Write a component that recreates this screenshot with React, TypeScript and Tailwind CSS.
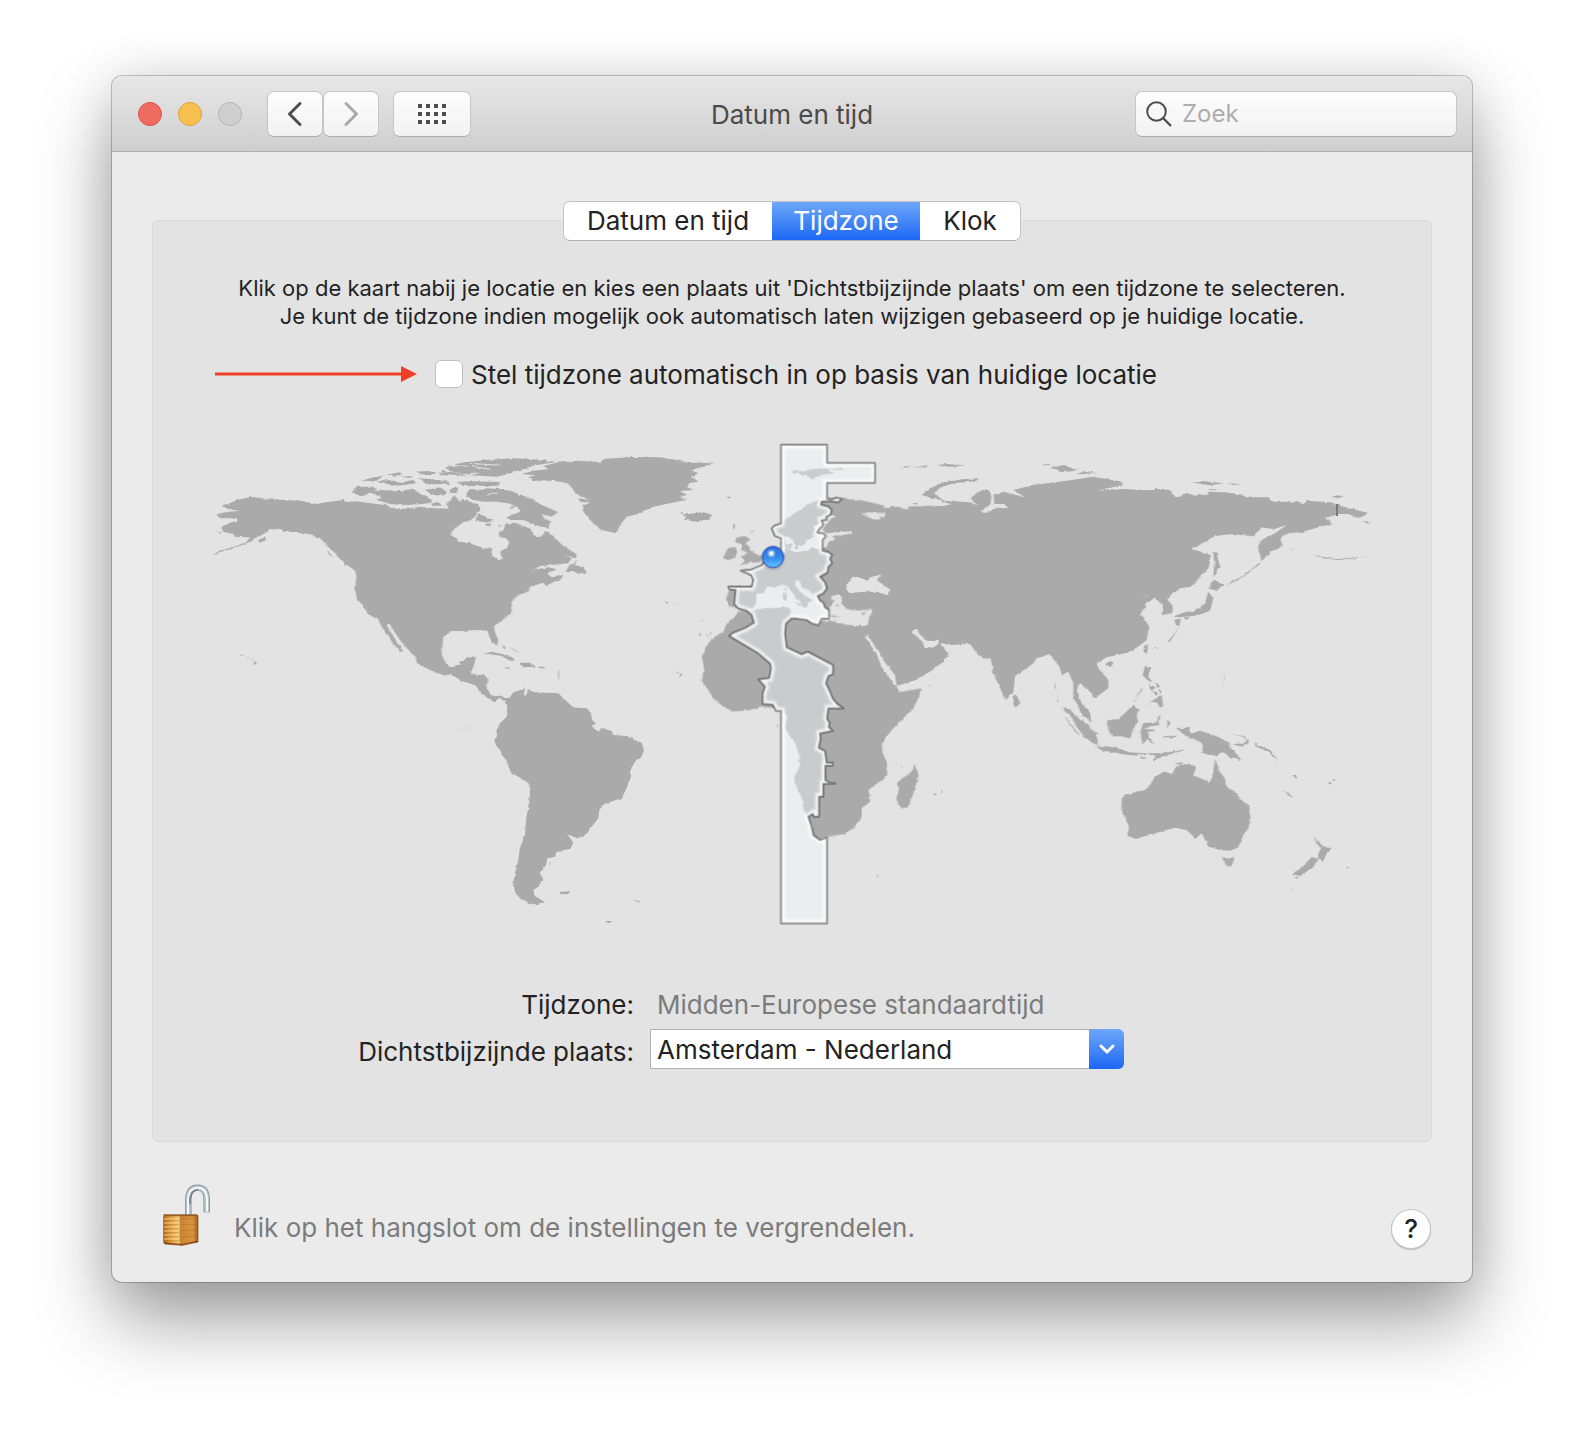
import React from "react";

const tabs = [
    { label: "Datum en tijd", width: "w-[208px]" },
    { label: "Tijdzone", width: "w-[148px]" },
    { label: "Klok", width: "w-[100px]" },
];

const tabStyle = (i: number, active: number) =>
    i === active
        ? "bg-linear-to-b from-[#6ea6f8] to-[#1a66f5] text-white"
        : "bg-white text-[#232323]";

const Padlock = () => (
    <svg viewBox="0 0 144 192" className="h-16 w-12 shrink-0" aria-hidden="true">
        <defs>
            <linearGradient id="brass" x1="0" x2="1" y1="0" y2="0">
                <stop offset="0" stopColor="#b56c1f" />
                <stop offset=".2" stopColor="#e39b41" />
                <stop offset=".45" stopColor="#f6c87c" />
                <stop offset=".48" stopColor="#c98432" />
                <stop offset=".85" stopColor="#d9953e" />
                <stop offset="1" stopColor="#a35c18" />
            </linearGradient>
        </defs>
        <path d="M79 94V44Q81 11 107 11Q133 11 134 44V85" fill="none" stroke="#7b888f" strokeWidth="19" />
        <path d="M79 94V44Q81 11 107 11Q133 11 134 44V83" fill="none" stroke="#b4c2c9" strokeWidth="15" />
        <path d="M78 94V46Q80 12 107 11Q133 11 135 44V83" fill="none" stroke="#f3f8fa" strokeWidth="6" />
        <path d="M84 60V44Q87 19 108 17" fill="none" stroke="#76838a" strokeWidth="5" />
        <path d="M6 92H104Q108 92 108 97V174L60 184L9 180Q5 179 5 174V97Q5 92 9 91Z" fill="url(#brass)" stroke="#7c4514" strokeWidth="2" />
        <path d="M8 95H106" stroke="#8a5420" strokeWidth="3" />
        {[105, 117, 129, 141, 153, 165].map((y) => (
            <g key={y}>
                <path d={`M6 ${y}H51`} stroke="#ffd894" strokeWidth="4" opacity=".6" />
                <path d={`M6 ${y + 5}H51`} stroke="#94540f" strokeWidth="2" opacity=".45" />
            </g>
        ))}
        <path d="M56 104H104M56 122H104M56 139H104M56 158H104" stroke="#a7651f" strokeWidth="3" opacity=".35" />
        <path d="M8 177L60 182L106 172" fill="none" stroke="#6f3208" strokeWidth="4" opacity=".7" />
    </svg>
);

const zonePath =
    "M303 44H441V99H585V159H441V205L455 208L470 203L485 206L475 217L450 213L425 215L423 224L445 230L455 240L452 253L438 262L441 269L425 271L430 285L415 300L412 308L430 310L438 318L428 330V362L445 366L456 375L450 386L456 400L445 410L442 428L420 440L435 457L441 475L430 490L413 498L420 512L430 518L435 532L447 540V566H425L415 586L395 580L380 570L345 565H335L318 580L315 610L320 652L365 673L383 665L459 705V732L445 738L438 760L450 785L458 805L470 820L490 835H445L441 865L449 880L446 890L458 903L420 910L422 925L416 953L435 963L440 998H458V1007H436V1050L448 1058L465 1060L430 1062V1100H417V1160H402L398 1152L385 1160L395 1190L400 1215L420 1230L441 1222V1480H303V843H288L278 824L248 822V790L255 770L235 748L268 744L273 715L270 700L235 670L148 618L160 608L195 594L222 578L215 555L200 542L175 535L163 522L167 480L148 478L145 470L215 470L220 450L213 435L182 422L215 418L245 405L255 392L303 360V325L285 318L275 295L283 287L303 280Z";

// map units are a third of a pixel, every group keeps its own local origin
const WorldMap = () => (
    <svg viewBox="0 0 3552 1470" className="block h-auto w-full" role="img" aria-label="Wereldkaart">
        <defs>
            <filter id="coast" x="-5%" y="-5%" width="110%" height="110%">
                <feTurbulence type="fractalNoise" baseFrequency=".07" numOctaves="2" seed="4" />
                <feDisplacementMap in="SourceGraphic" scale="9" xChannelSelector="R" yChannelSelector="G" />
            </filter>
            <filter id="glow">
                <feGaussianBlur stdDeviation="3" />
            </filter>
            <clipPath id="zone">
                <path d={zonePath} />
            </clipPath>
            <linearGradient id="pin" x1="0" x2="0" y1="0" y2="1">
                <stop offset="0" stopColor="#2f6fd6" />
                <stop offset=".5" stopColor="#3488ea" />
                <stop offset="1" stopColor="#5ec9ff" />
            </linearGradient>
        </defs>
        <g fill="#aaaaaa" filter="url(#coast)">
            {/* North America, west */}
            <g>
                <path d="M60 196L90 190L110 180L155 171L185 175L240 179L300 182L350 192L385 186L430 180L440 186L470 184L500 188L560 196L570 203L620 206L660 200L690 204L745 206L742 188L752 176L764 165L775 182L800 189L812 200L840 210L830 224L815 240L790 246L760 270L753 288L770 295L775 306L810 312L850 325L875 327L875 345L895 360L902 362V542L885 550L880 565L890 590L893 612L880 610L868 590L862 570L850 572L835 565L800 570L805 577L780 572L755 573L730 590L728 610L724 640L735 668L755 682L785 675L795 655L828 650L820 680L812 703L850 705L863 715L860 745L872 765L895 775L870 775L845 765L840 750L820 732L785 722L750 702L735 707L690 690L650 668L648 655L625 630L600 600L580 570L570 553L560 556L580 590L608 632L600 633L575 605L565 585L550 570L535 540L505 523L490 500L470 475L465 445L470 405L462 390L435 370L405 340L385 320L360 295L330 283L290 276L250 275L245 268L210 268L195 280L175 290L150 305L110 322L60 337L37 346L60 332L110 318L140 305L150 292L105 290L100 282L70 275L62 262L85 248L113 243L110 235L60 235L47 223L85 215L118 213L85 207Z" />
                <path d="M505 155L540 150L600 153L640 146L665 165L700 180L690 190L630 195L570 193L530 180L545 172Z" />
                <path d="M455 160L465 140L510 140L532 148L515 155L490 168Z" />
                <path d="M480 124L520 112L550 108L530 122ZM530 126L560 118L600 128L640 120L650 130L590 137ZM560 104L600 97L605 104L580 108ZM645 95L690 93L710 100L680 106ZM650 115L700 118L745 125L750 133L700 133ZM680 150L720 142L740 155L730 167L700 165ZM735 82L780 75L820 85L845 95L790 103L750 92ZM715 97L750 102L752 107L725 105ZM750 145L775 142L770 160L752 158ZM600 110L640 108L630 114ZM690 192L712 186L728 196L700 199Z" />
                <path d="M173 300L195 292L198 300L180 308ZM50 276L66 277L60 281ZM360 292L380 304L372 306ZM380 330L402 354L388 345ZM430 368L460 376L485 394L470 390Z" />
                <path d="M159 662L171 670L163 675ZM122 644H129V647H122ZM140 651L148 654L144 656ZM150 657H158V659Z" />
            </g>
            {/* North America, east and Greenland */}
            <g transform="translate(660 0)">
                <path d="M257 250L290 252L330 264L340 285L360 292L378 275L385 275L430 318L470 343L468 355L430 348L455 355L445 370L400 374L360 378L325 403L350 388L385 382L410 388L382 402L395 412L430 405L425 414L378 437L370 428L330 440L325 455L295 465L275 485L277 515L240 545L222 558L225 580L235 600L230 617L215 600L205 575L195 570L100 572V304L115 305L150 310L190 325L215 327L218 350L235 362L247 355L240 335L262 322L268 308L258 295L240 292L236 280L252 266Z" />
                <path d="M435 396L450 375L472 360L463 376L490 380L498 402L480 400L460 396Z" />
                <path d="M305 102L340 92L385 88L370 78L410 68L470 62L540 66L555 56L640 51L720 52L800 65L760 66L885 70L850 80L810 90L835 100L815 110L835 125L805 130L800 140L820 150L780 153L800 165L780 170L800 180L760 187L690 203L655 222L620 230L600 255L590 280L545 270L510 240L490 215L487 195L515 188L480 185L475 175L510 180L470 165L445 130L400 122L340 122L325 112L345 106Z" />
                <path d="M75 85L120 68L200 60L280 55L370 60L410 66L330 78L340 82L290 92L265 102L230 110L150 106L180 98L110 92Z" />
                <path d="M60 92L100 96L150 110L80 102ZM110 126L150 124L240 126L235 137L130 138ZM5 122L60 120L65 130L20 132ZM15 150L60 145L75 155L60 165L30 160Z" />
                <path d="M140 160L150 147L185 150L200 145L260 148L290 160L340 178L355 190L412 215L395 230L362 222L390 245L385 265L355 258L310 240L265 240L260 232L300 215L300 205L265 190L230 185L190 185L160 180L138 172Z" />
                <path d="M165 243L178 222L200 232L222 243L200 247ZM95 190L130 180L175 192L180 212L165 222L140 212ZM196 252L212 250L214 256L200 259ZM234 254L242 255L240 262ZM265 202L285 198L280 206Z" />
                <path d="M775 218L800 223L850 216L877 225L865 238L825 245L790 238L800 230Z" />
                <path d="M190 642L215 635L250 643L290 662L270 662L245 648L215 643ZM300 668L330 668L348 680L310 682ZM252 681L272 683L262 687ZM358 681H374V685H358ZM248 615L258 625L252 628ZM265 618L300 640L285 634Z" />
                <path d="M415 690L419 715L416 718L413 695ZM730 484L748 487L738 488ZM760 492H765V495ZM835 582L850 586L840 587ZM858 582L868 588L860 588ZM870 578L878 576L873 586ZM765 693H772L780 712L788 700L776 703ZM842 540H850V543ZM922 171H932V174H922ZM938 258L946 256L942 266Z" />
                <path d="M90 76L160 80L210 88M150 70L240 76M10 138L110 142M200 166Q215 156 232 160" fill="none" stroke="#e3e3e3" strokeWidth="3" />
            </g>
            {/* South America */}
            <g transform="translate(780 660)">
                <path d="M0 5L15 0H45L30 43L75 48L82 60L78 90L95 112L120 105L140 118L150 112L160 97L190 88L195 82L193 100L200 110L203 90L225 97L260 98L295 100L310 115L340 142L375 145L393 158L395 175L405 190L395 198L415 215L425 205L455 213L460 225L500 228L525 240L545 248L552 270L545 290L525 305L512 328L510 350L500 385L485 415L460 422L430 435L418 450L415 475L395 500L370 530L350 535L322 523L340 548L330 567L290 575L285 590L262 595L258 615L238 640L250 657L240 668L235 680L220 690L225 708L255 727L235 735L205 728L180 715L165 695L160 670L165 640L175 600L180 560L195 525L198 480L205 440L210 400L208 372L190 358L155 340L140 305L120 270L107 255L103 238L115 228L108 215L120 190L140 170L142 140L138 125L118 113L105 127L65 100L60 85L30 70L0 62Z" />
                <path d="M298 696L330 694L325 702L302 703ZM265 606L273 606L270 612ZM520 720L535 722L543 728L530 725ZM2 200L10 208L5 208ZM18 202L24 206H18ZM440 783H455V786H440Z" />
            </g>
            {/* Europe, Near East */}
            <g transform="translate(1440 -30)">
                <path d="M145 528L138 505L148 480L145 470L185 466L215 468L220 450L210 432L182 420L215 418L245 405L260 385L300 372L314 366L312 350L310 322L290 322L275 300L280 290L305 278L340 252L380 225L415 210L455 203L485 205L550 212L600 224L628 240L612 249L565 247L545 249L575 266L602 268L598 260L622 262L618 250L650 250L655 232L688 240L684 229L760 228V560L640 560L577 537L560 540L520 542L485 532L460 520L450 530L445 545L430 532L420 515L408 502L390 486L365 470L358 452L345 452L346 470L375 500L400 510L385 518L380 532L368 535L366 518L345 502L330 478L315 462L290 470L262 470L250 490L230 490L228 520L215 535L180 542L165 532Z" />
                <path d="M130 387L135 372L145 353L165 352L172 365L165 383L145 390Z" />
                <path d="M165 335L170 322L195 318L212 328L196 340L208 350L215 365L235 375L248 382L240 398L215 398L178 405L195 392L185 382L202 368L180 358L185 345Z" />
                <path d="M308 490L320 488L320 510L310 512ZM313 475L319 472L318 485ZM345 518L370 518L362 528ZM452 555L480 560L455 561ZM540 550L560 545L548 554Z" />
                <path d="M330 120L370 125L400 117L440 115L462 130L420 135L398 148L375 134L345 130ZM440 118L490 115L485 120ZM158 286H166L162 293ZM212 304L222 302L214 312ZM140 201H152V204H140ZM662 110L700 112L745 106L740 113Z" />
            </g>
            {/* Africa */}
            <g transform="translate(1440 480)">
                <path d="M175 33L215 30L260 25L325 22L335 38L330 50L345 55L380 60L415 75L430 62L450 62L475 68L505 75L545 78L560 78L545 92L565 125L590 160L605 200L630 235L650 262L655 277L722 265L718 290L700 325L670 355L635 390L605 430L608 460L620 485L622 525L605 540L565 570L572 600L545 625L545 650L520 685L490 703L445 708L420 718L400 710L395 680L380 650L370 620L367 595L345 555L342 530L360 500L357 460L345 430L325 400L315 385L322 345L305 330L285 325L245 320L210 330L155 335L125 315L100 295L85 270L65 240L72 205L65 170L85 130L105 110L130 95L140 70L165 50Z" />
                <path d="M652 545L690 520L705 493L716 525L700 580L685 620L665 625L647 600L657 570Z" />
                <path d="M762 580H768V585H762ZM782 573H787V578H782ZM745 256L755 257L748 260ZM645 490L652 494H647ZM663 498L668 502H664ZM291 375H295V379H291ZM590 830H596V833H590Z" />
            </g>
            {/* Asia */}
            <g transform="translate(2100 0)">
                <path d="M-40 200L-5 200L5 210L30 208L80 197L130 198L152 192L120 183L155 183L210 187L232 200L212 175L235 155L265 150L275 165L270 195L240 213L262 218L290 203L325 205L315 192L283 192L281 165L310 155L375 172L340 150L400 135L500 122L580 110L668 125L665 135L595 152L680 147L760 152L790 146V470L745 465L710 485L740 498L722 520L748 560L740 600L695 635L620 652L592 668L595 685L625 720L625 745L585 775L575 760L540 730L530 750L545 790L570 820L575 848L545 825L530 790L520 775L520 730L505 695L485 705L478 680L450 642L410 655L400 670L345 710L340 755L318 780L305 755L280 700L270 648L268 657L252 655L230 640L210 612L150 615L118 608L145 642L130 665L75 705L40 722L-10 738L-25 705L-50 675L-65 640L-90 605L-95 580L-100 595L-118 575L-112 558L-95 555L-83 508L-100 460L-60 300Z" />
                <path d="M65 165L90 145L130 127L190 118L235 115L230 123L160 130L120 143L103 160L125 178L155 190L110 178ZM450 85L490 75L535 92L490 96L470 88ZM530 103L555 92L590 100ZM430 73H450V76H430ZM35 190L55 188L45 194ZM110 75L140 72L195 76L150 80ZM0 80L30 79L20 83Z" />
                <path d="M618 673L628 664L642 665L632 682ZM338 766L348 764L361 788L350 802L341 798ZM465 725L467 750L463 742ZM470 765L476 790L472 785Z" />
            </g>
            {/* Siberia, Japan, Philippines */}
            <g transform="translate(2790 0)">
                <path d="M-30 148L60 152L80 147L120 150L135 170L150 172L160 162L230 165L235 155L280 157L330 163L350 172L415 172L430 185L500 185L525 190L530 182L600 187L640 200L690 213L718 220L685 235L655 222L628 222L585 235L612 252L570 260L520 275L475 280L450 295L458 318L420 340L395 363L383 320L395 300L435 280L470 255L430 268L395 262L370 288L300 283L255 288L187 328L240 345L238 380L185 440L150 445L110 475L130 500L125 520L98 525L98 490L70 475L35 500L18 485L58 465L-30 470Z" />
                <path d="M130 530L160 517L195 512L225 490L235 455L250 472L240 512L215 522L190 528L150 532ZM133 540L152 535L148 558L138 556ZM165 532H180L168 541ZM236 446L250 420L282 435L258 452ZM250 335L262 340L265 365L272 382L260 388V405L250 410L253 370Z" />
                <path d="M285 437L310 427L345 407L390 372L388 368L340 407L300 428Z" />
                <path d="M40 635L42 622L55 612L50 642ZM38 705L45 678L62 682L55 710L68 728L45 715ZM62 785L95 765L100 798L90 803L82 788ZM56 728L72 742L66 758ZM75 725L92 740L82 745ZM72 752L86 760L76 768ZM85 743L95 756L90 762ZM40 740L12 775L35 752Z" />
                <path d="M190 128L215 123L280 130L240 136ZM290 130L335 132L315 136ZM235 147L265 148L245 151ZM605 170L625 166L642 170L620 174ZM695 243L725 246L710 249ZM545 345L580 355L625 360L660 357L720 347L660 354L620 357L585 352ZM480 323L495 330L488 329ZM150 558L120 605L112 605L130 585ZM70 622L90 620L80 625ZM285 700L278 732L284 715Z" />
            </g>
            {/* Indonesia and Oceania */}
            <g transform="translate(2490 660)">
                <path d="M275 415L290 403L345 390L358 378L375 350L405 333L425 343L440 318L465 312L500 318L490 345L540 368L548 345L555 298L570 335L582 352L590 380L612 393L630 415L658 440L662 475L655 505L640 525L625 562L600 572L570 570L535 560L515 520L495 537L470 510L435 503L380 518L350 527L318 537L292 527L297 500L275 450Z" />
                <g stroke="#aaaaaa" strokeWidth="2">
                    <path d="M577 592L594 597L612 592L605 615L592 619ZM850 532L866 544L880 562L903 565L892 578L880 600L866 596L864 586L874 568ZM862 597L850 620L830 632L815 648L788 642L820 620L845 592ZM796 652L804 651L799 656ZM438 310L458 308L450 314Z" />
                    <path d="M98 145L120 150L150 180L168 188L192 215L202 230L202 255L185 246L160 225L140 200L128 175ZM198 260L230 260L265 266L300 278L350 281L300 285L255 277L215 270ZM232 182L265 178L285 160L310 135L328 150L318 162L324 185L310 205L300 235L275 228L245 228L236 208ZM332 215L340 190L380 188L390 165L385 195L345 200L348 208L372 210L352 218L368 250L350 236L338 252Z" />
                    <path d="M440 205L475 205L482 222L510 213L560 230L590 245L600 262L635 300L600 290L580 275L555 287L515 278L520 255L490 235L465 225ZM610 252L640 252L655 238L652 252L630 258ZM355 281L405 280L440 274L460 270L400 288L370 300L378 290ZM330 290L348 295L335 296ZM400 230L440 228L430 233ZM412 180L420 190L414 205Z" />
                </g>
                <path d="M105 168L150 228L142 222L110 180ZM672 250L720 270L745 302L715 277L680 260ZM762 390L792 413L775 407ZM788 345L798 345L800 358ZM893 368L905 366L902 374ZM905 360L920 357L910 363ZM988 328L1000 332ZM950 620H955V625H950ZM783 687H787V690H783ZM805 370L818 390ZM655 300L665 306ZM600 222L640 228L652 240L630 228ZM195 212L210 225L198 222ZM310 130L338 90L315 120ZM345 145L370 118L360 130Z" />
            </g>
        </g>
        {/* inland seas */}
        <g fill="#e3e3e3" filter="url(#coast)">
            <g transform="translate(1440 -30)">
                <path d="M312 320L330 318L348 348L368 350L380 330L405 318L408 300L400 290L425 275L440 262L450 254L470 258L448 272L428 300L440 310L515 304V312L460 318L465 330L445 335L440 352L400 355L370 364L345 366L325 358L322 345Z" />
                <path d="M498 478L505 455L520 438L545 445L562 452L575 440L608 433L590 450L632 480L620 492L560 484L510 490Z" />
                <path d="M452 500L475 493L486 500L484 515L494 535L470 545L452 530L460 518Z" />
                <path d="M692 602L712 598L722 615L740 632L765 634L776 628L775 642L755 655L735 653L725 635Z" />
                <path d="M545 600L565 635L590 670L605 708L630 743L650 771L645 735L615 698L597 670L578 638L563 615L557 620Z" />
            </g>
        </g>
        <g fill="#aaaaaa" transform="translate(1440 -30)">
            <path d="M324 342L338 340L332 358L324 356ZM345 348H354V357H345ZM456 508L464 512L460 518ZM468 522L478 528L470 530Z" />
        </g>
        <path d="M3411 192V228" stroke="#777777" strokeWidth="6" />
        {/* selected time zone */}
        <g transform="translate(1440 -30)">
            <path d={zonePath} fill="#f9fafd" fillOpacity=".42" />
            <g clipPath="url(#zone)">
                <path d={zonePath} fill="none" stroke="#ffffff" strokeWidth="22" opacity=".8" filter="url(#glow)" />
            </g>
            <path d={zonePath} fill="none" stroke="#000000" strokeOpacity=".4" strokeWidth="6" strokeLinejoin="round" />
            <circle cx="278" cy="385" r="34" fill="#000000" opacity=".18" filter="url(#glow)" />
            <circle cx="279" cy="381" r="32" fill="url(#pin)" stroke="#3440a8" strokeWidth="3" />
            <circle cx="274" cy="370" r="9" fill="#ffffff" opacity=".85" filter="url(#glow)" />
            <circle cx="274" cy="370" r="6" fill="#ffffff" opacity=".8" />
        </g>
    </svg>
);

const toolButton =
    "flex h-[46px] items-center justify-center rounded-[7px] border border-[#c6c6c6] border-b-[#adadad] bg-linear-to-b from-[#fdfdfd] to-[#f2f2f2]";

const TitleBar = () => (
    <header className="grid h-[76px] grid-cols-[1fr_auto_1fr] items-center rounded-t-[10px] border-b border-[#adadad] bg-linear-to-b from-[#e7e7e7] to-[#cfcfcf] px-[15px]">
        <div className="flex items-center pl-[11px]">
            <div className="flex gap-4">
                <button aria-label="Sluit" className="size-6 rounded-full border border-[#dc5349] bg-[#ef6b60]" />
                <button aria-label="Minimaliseer" className="size-6 rounded-full border border-[#dfa039] bg-[#f7c04f]" />
                <button aria-label="Vergroot" disabled className="size-6 rounded-full border border-[#b4b4b4] bg-[#cfcfcf]" />
            </div>
            <button aria-label="Vorige" className={toolButton + " ml-[25px] w-14"}>
                <svg viewBox="0 0 16 26" className="h-[26px] w-4" fill="none" stroke="#4d4d4d" strokeWidth="3" strokeLinecap="round" strokeLinejoin="round">
                    <path d="M13 2.500L2.500 13L13 23.500" />
                </svg>
            </button>
            <button aria-label="Volgende" className={toolButton + " w-14"}>
                <svg viewBox="0 0 16 26" className="h-[26px] w-4" fill="none" stroke="#a9a9a9" strokeWidth="3" strokeLinecap="round" strokeLinejoin="round">
                    <path d="M3 2.500L13.500 13L3 23.500" />
                </svg>
            </button>
            <button aria-label="Toon alles" className={toolButton + " ml-[14px] w-[78px]"}>
                <svg viewBox="0 0 28 20" className="h-5 w-7" fill="#4d4d4d">
                    {[0, 8, 16].map((y) => [0, 8, 16, 24].map((x) => <rect key={`${x}-${y}`} x={x} y={y} width="4" height="4" />))}
                </svg>
            </button>
        </div>
        <h1 className="pt-[2px] text-[26px] text-[#4a4a4a]">Datum en tijd</h1>
        <label className={toolButton + " ml-auto w-[322px] gap-[10px] pl-[10px]"}>
            <svg viewBox="0 0 26 26" className="size-[26px] shrink-0" fill="none" stroke="#4d4d4d" strokeWidth="2">
                <circle cx="10.500" cy="10.500" r="9.300" />
                <path d="M17 17L25 25" strokeWidth="2.400" />
            </svg>
            <input type="text" placeholder="Zoek" aria-label="Zoek" className="w-full min-w-0 bg-transparent text-[24px] text-[#232323] outline-none placeholder:text-[#adadad]" />
        </label>
    </header>
);

const App = () => {
    const [active, setActive] = React.useState(1);
    const [auto, setAuto] = React.useState(false);

    return (
        <div className="min-h-screen bg-white px-28 pt-[76px] pb-[148px] font-['Inter','Liberation_Sans',sans-serif] text-[#232323]">
            <main className="rounded-[10px] bg-[#ebebeb] shadow-[0_0_0_1px_rgba(0,0,0,0.22),0_38px_76px_rgba(0,0,0,0.38),0_0_50px_rgba(0,0,0,0.1)]">
                <TitleBar />
                <section className="mx-10 mt-[68px] flex flex-col rounded-md border border-[#d9d9d9] bg-[#e3e3e3] pb-[72px]">
                    <div role="tablist" className="-mt-5 flex self-center overflow-hidden rounded-[7px] border border-[#c3c3c3] border-b-[#b0b0b0]">
                        {tabs.map((tab, i) => (
                            <button key={tab.label} role="tab" aria-selected={i === active} onClick={() => setActive(i)} className={`h-[38px] text-[26px] leading-[38px] ${tab.width} ${tabStyle(i, active)}`}>
                                {tab.label}
                            </button>
                        ))}
                    </div>
                    <p className="mt-[33px] text-center text-[22px] leading-7">
                        Klik op de kaart nabij je locatie en kies een plaats uit 'Dichtstbijzijnde plaats' om een tijdzone te selecteren.
                        <br />
                        Je kunt de tijdzone indien mogelijk ook automatisch laten wijzigen gebaseerd op je huidige locatie.
                    </p>
                    <div className="mt-7 flex h-8 items-center pl-[62px]">
                        <svg viewBox="0 0 202 16" className="mr-[18px] h-4 w-[202px] shrink-0" aria-hidden="true">
                            <path d="M0 8H188" stroke="#ee4027" strokeWidth="3" />
                            <path d="M186 0L202 8L186 16Z" fill="#ee4027" />
                        </svg>
                        <label className="flex items-center gap-2 text-[26px]">
                            <input type="checkbox" checked={auto} onChange={() => setAuto(!auto)} className="size-7 appearance-none rounded-[6px] border border-[#c0c0c0] bg-white checked:bg-[#1a66f5]" />
                            Stel tijdzone automatisch in op basis van huidige locatie
                        </label>
                    </div>
                    <div className="mx-[47px] mt-[50px]">
                        <WorldMap />
                    </div>
                    <div className="mt-14 grid grid-cols-[481px_1fr] items-center gap-x-4 text-[26px]">
                        <span className="text-right leading-[38px]">Tijdzone:</span>
                        <span className="pl-[7px] leading-[38px] text-[#7b7b7b]">Midden-Europese standaardtijd</span>
                        <label htmlFor="plaats" className="mt-[5px] pt-[6px] text-right leading-[34px]">Dichtstbijzijnde plaats:</label>
                        <div className="relative mt-[5px] w-[474px]">
                            <select id="plaats" className="h-10 w-full appearance-none rounded-r-md border border-[#b0b0b0] bg-white pt-[2px] pl-[6px] text-[26px] leading-9">
                                <option>Amsterdam - Nederland</option>
                            </select>
                            <span className="pointer-events-none absolute inset-y-0 right-0 flex w-[35px] items-center justify-center rounded-r-md bg-linear-to-b from-[#6ea6f8] to-[#1a66f5]">
                                <svg viewBox="0 0 16 10" className="h-[10px] w-4" fill="none" stroke="#ffffff" strokeWidth="3" strokeLinecap="round" strokeLinejoin="round">
                                    <path d="M2 2L8 8L14 2" />
                                </svg>
                            </span>
                        </div>
                    </div>
                </section>
                <footer className="flex h-[140px] items-center pt-[30px] pr-[41px] pl-[50px]">
                    <button aria-label="Hangslot" className="-mt-[22px] mr-6">
                        <Padlock />
                    </button>
                    <p className="text-[26px] text-[#7b7b7b]">Klik op het hangslot om de instellingen te vergrendelen.</p>
                    <button aria-label="Help" className="ml-auto mt-1 size-10 rounded-full border border-[#c3c3c3] bg-white text-[26px] leading-9 font-medium shadow-[0_1px_1px_rgba(0,0,0,0.2)]">?</button>
                </footer>
            </main>
        </div>
    );
};

export default App;
